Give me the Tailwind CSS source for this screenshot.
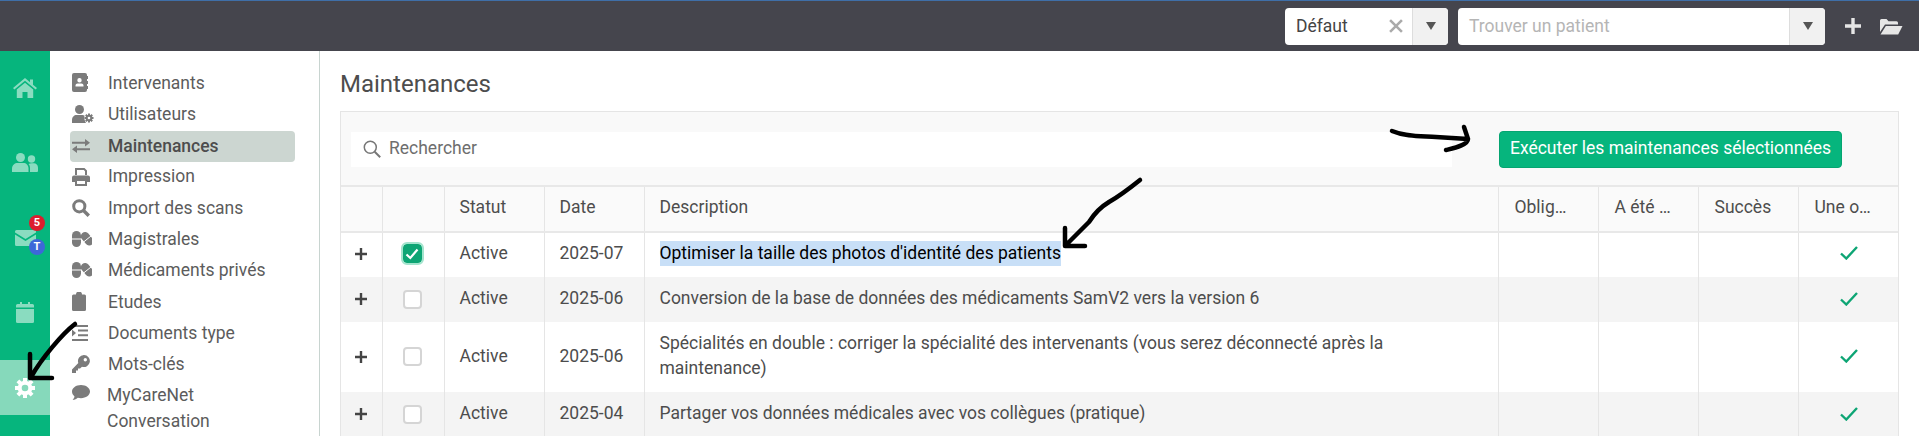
<!DOCTYPE html>
<html lang="fr">
<head>
<meta charset="UTF-8">
<title>Maintenances</title>
<script src="https://cdn.jsdelivr.net/npm/@tailwindcss/browser@4"></script>
</head>
<body class="font-['Roboto',sans-serif] text-[17.5px] text-[#4d4d4d] bg-white">
<div class="relative w-full h-screen overflow-hidden flex flex-col">

  <!-- barre du haut -->
  <header class="h-[51px] shrink-0 bg-[#45454d] border-t-[1px] border-[#3f6fa8] flex items-center justify-end pr-[16px]">
    <div class="w-[163px] h-[37px] bg-white rounded-[4px] flex items-center mr-[10px]">
      <span class="flex-1 pl-[11px] text-[#444]">Défaut</span>
      <svg class="w-[14px] h-[14px] mr-[9px]" viewBox="0 0 13 13"><path d="M1 1l11 11M12 1L1 12" stroke="#aaa" stroke-width="2.400"/></svg>
      <div class="w-[36px] h-full bg-[#f1f1f1] border-l border-[#ddd] rounded-r-[4px] flex items-center justify-center">
        <svg class="w-[10px] h-[8px]" viewBox="0 0 10 8"><path d="M0 0h10L5 8z" fill="#555"/></svg>
      </div>
    </div>
    <div class="w-[367px] h-[37px] bg-white rounded-[4px] flex items-center">
      <span class="flex-1 pl-[11px] text-[#b5b5b5]">Trouver un patient</span>
      <div class="w-[36px] h-full bg-[#f1f1f1] border-l border-[#ddd] rounded-r-[4px] flex items-center justify-center">
        <svg class="w-[10px] h-[8px]" viewBox="0 0 10 8"><path d="M0 0h10L5 8z" fill="#555"/></svg>
      </div>
    </div>
    <svg class="w-[18px] h-[18px] ml-[19px]" viewBox="0 0 18 18"><path d="M9 1v16M1 9h16" stroke="#e6e6e6" stroke-width="3.400"/></svg>
    <svg class="w-[24px] h-[19px] ml-[17px]" viewBox="0 0 24 19"><path d="M1 3.500A1.500 1.500 0 0 1 2.500 2h5l2 2.200h8a1.500 1.500 0 0 1 1.500 1.500V7.500H6L1 15z" fill="#e6e6e6"/><path d="M6.800 9H23.500l-4.300 8.500H1.500z" fill="#e6e6e6"/></svg>
  </header>

  <div class="flex flex-1 min-h-0">
    <!-- barre verte -->
    <nav class="w-[50px] shrink-0 bg-[#06b57d] flex flex-col gap-[20px] pt-[9px]">
      <div class="h-[55px] flex items-center justify-center">
        <svg class="w-[24px] h-[20px]" viewBox="0 0 24 20" fill="#8adcc0"><path d="M12 0L0 10l1.400 1.600L12 2.800l10.600 8.800L24 10l-4-3.300V1.500h-3v2.700z"/><path d="M12 4.800L3.800 11.600V20h5.700v-6h5v6h5.700v-8.400z"/></svg>
      </div>
      <div class="h-[55px] flex items-center justify-center">
        <svg class="w-[26px] h-[19px]" viewBox="0 0 26 19" fill="#8adcc0"><circle cx="8.500" cy="4.500" r="4.500"/><circle cx="19.500" cy="6" r="3.700"/><path d="M0 19v-3.500C0 12 3 10 5.500 10h6c2.500 0 5 2 5 5.500V19z"/><path d="M18 19v-4c0-1.500-.5-3-1.500-4 1-.5 2-.7 3-.7h2.500c2 0 4 1.700 4 4.500V18a1 1 0 0 1-1 1z"/></svg>
      </div>
      <div class="relative h-[55px] flex items-center justify-center">
        <svg class="w-[21px] h-[16px]" viewBox="0 0 21 16" fill="#8adcc0"><path d="M1.500 0h18A1.500 1.500 0 0 1 21 1.500v1L10.500 9 0 2.500v-1A1.500 1.500 0 0 1 1.500 0z"/><path d="M0 4.500L10.500 11 21 4.500v10a1.500 1.500 0 0 1-1.500 1.500h-18A1.500 1.500 0 0 1 0 14.500z"/></svg>
        <span class="absolute left-[29px] top-[5px] w-[16px] h-[16px] rounded-full bg-[#dc1c2e] text-white text-[11px] font-bold leading-[16px] text-center">5</span>
        <span class="absolute left-[29px] top-[29px] w-[16px] h-[16px] rounded-full bg-[#3d68d8] text-white text-[11px] font-bold leading-[16px] text-center">T</span>
      </div>
      <div class="h-[55px] flex items-center justify-center">
        <svg class="w-[18px] h-[21px]" viewBox="0 0 18 21" fill="#8adcc0"><path d="M4 0h2v3H4zM12 0h2v3h-2z"/><path d="M1.500 2h15A1.500 1.500 0 0 1 18 3.500v2H0v-2A1.500 1.500 0 0 1 1.500 2z"/><path d="M0 7h18v12.500a1.500 1.500 0 0 1-1.500 1.500h-15A1.500 1.500 0 0 1 0 19.500z"/></svg>
      </div>
      <div class="h-[55px] bg-[#86d9bb] flex items-center justify-center">
        <svg class="w-[20px] h-[20px]" viewBox="0 0 20 20" fill="none" stroke="#fff"><circle cx="10" cy="10" r="5.300" stroke-width="4"/><path stroke-width="4" d="M10 0v4M10 16v4M0 10h4M16 10h4M2.900 2.900l2.800 2.800M14.300 14.300l2.800 2.800M2.900 17.100l2.800-2.800M14.300 5.700l2.800-2.800"/></svg>
      </div>
    </nav>

    <!-- menu -->
    <aside class="w-[270px] shrink-0 border-r border-[#c8d4d0] pl-[20px] pr-[24px] pt-[16px] text-[#5c5c5c]">
      <ul class="flex flex-col">
        <li class="h-[31.300px] flex items-center">
          <span class="w-[38px] pl-[2px]"><svg class="w-[16px] h-[19px]" viewBox="0 0 16 19"><path fill="#7b7b7b" fill-rule="evenodd" d="M2 0h11a2 2 0 0 1 2 2v15a2 2 0 0 1-2 2H2a2 2 0 0 1-2-2V2a2 2 0 0 1 2-2zM7.500 5a2.200 2.200 0 1 0 0 4.400 2.200 2.200 0 0 0 0-4.400zM3.500 13.500h8v-1c0-1.300-1-2-2-2h-4c-1 0-2 .7-2 2z"/><path fill="#7b7b7b" d="M15 3h1v3h-1zM15 8h1v3h-1zM15 13h1v3h-1z"/></svg></span>
          <span>Intervenants</span>
        </li>
        <li class="h-[31.300px] flex items-center">
          <span class="w-[38px] pl-[2px]"><svg class="w-[22px] h-[18px]" viewBox="0 0 22 18" fill="#7b7b7b"><circle cx="7.500" cy="4.500" r="4.500"/><path d="M0 18v-3c0-3 2.200-5 4.500-5h6c.8 0 1.500.2 2 .5-.6 2.500.2 5.500 1.500 7.500z"/><circle cx="17" cy="13" r="2.300" fill="none" stroke="#7b7b7b" stroke-width="2"/><path stroke="#7b7b7b" stroke-width="2" d="M17 8.500v2M17 15.500v2M12.500 13h2M19.500 13h2M13.800 9.800l1.400 1.400M18.800 14.800l1.400 1.400M13.800 16.200l1.400-1.400M18.800 11.200l1.400-1.400"/></svg></span>
          <span>Utilisateurs</span>
        </li>
        <li class="h-[31.300px] mt-[1px] -mb-[1px] flex items-center bg-[#ccd6d1] rounded-[4px] font-medium text-[#4d4d4d]">
          <span class="w-[38px] pl-[2px]"><svg class="w-[18px] h-[14px]" viewBox="0 0 18 14" fill="#7b7b7b"><path d="M0 2.700h13V0l5 3.700-5 3.700V4.700H0z"/><path d="M18 9.300H5V6.600L0 10.300 5 14v-2.700h13z"/></svg></span>
          <span>Maintenances</span>
        </li>
        <li class="h-[31.300px] flex items-center">
          <span class="w-[38px] pl-[2px]"><svg class="w-[18px] h-[18px]" viewBox="0 0 18 18"><path fill="#7b7b7b" d="M3 0h9.500L15 2.500V7h-2V3.200L11.800 2H5v5H3z"/><path fill="#7b7b7b" fill-rule="evenodd" d="M2 7.500h14a2 2 0 0 1 2 2V14h-3v4H3v-4H0V9.500a2 2 0 0 1 2-2zM5 13v3h8v-3z"/></svg></span>
          <span>Impression</span>
        </li>
        <li class="h-[31.300px] flex items-center">
          <span class="w-[38px] pl-[2px]"><svg class="w-[18px] h-[18px]" viewBox="0 0 18 18" fill="none" stroke="#7b7b7b"><circle cx="7.300" cy="7.300" r="5.600" stroke-width="3"/><path stroke-width="3.400" d="M11.500 11.500l5.300 5.300"/></svg></span>
          <span>Import des scans</span>
        </li>
        <li class="h-[31.300px] flex items-center">
          <span class="w-[38px] pl-[2px]"><svg class="w-[20px] h-[16px]" viewBox="0 0 20 16"><rect x="0" y="0" width="9" height="16" rx="4.500" fill="#7b7b7b"/><rect x="11" y="0.500" width="8.500" height="15" rx="4.250" fill="#7b7b7b" transform="rotate(-40 15 8)"/><path d="M0 8h9M11 11.500l8-6.500" stroke="#fff" stroke-width="1"/></svg></span>
          <span>Magistrales</span>
        </li>
        <li class="h-[31.300px] flex items-center">
          <span class="w-[38px] pl-[2px]"><svg class="w-[20px] h-[16px]" viewBox="0 0 20 16"><rect x="0" y="0" width="9" height="16" rx="4.500" fill="#7b7b7b"/><rect x="11" y="0.500" width="8.500" height="15" rx="4.250" fill="#7b7b7b" transform="rotate(-40 15 8)"/><path d="M0 8h9M11 11.500l8-6.500" stroke="#fff" stroke-width="1"/></svg></span>
          <span>Médicaments privés</span>
        </li>
        <li class="h-[31.300px] flex items-center">
          <span class="w-[38px] pl-[2px]"><svg class="w-[14px] h-[19px]" viewBox="0 0 14 19" fill="#7b7b7b"><path d="M1.500 2.500H4a3 3 0 0 1 6 0h2.500A1.500 1.500 0 0 1 14 4v13.500a1.500 1.500 0 0 1-1.500 1.500h-11A1.500 1.500 0 0 1 0 17.500V4a1.500 1.500 0 0 1 1.500-1.500z"/></svg></span>
          <span>Etudes</span>
        </li>
        <li class="h-[31.300px] flex items-center">
          <span class="w-[38px] pl-[2px]"><svg class="w-[16px] h-[16px]" viewBox="0 0 16 16" fill="#7b7b7b"><path d="M0 0h16v2H0zM6 4.600h10v2H6zM6 9.200h10v2H6zM0 14h16v2H0zM0 4.500L4 8l-4 3.500z"/></svg></span>
          <span>Documents type</span>
        </li>
        <li class="h-[31.300px] flex items-center">
          <span class="w-[38px] pl-[2px]"><svg class="w-[18px] h-[18px]" viewBox="0 0 18 18"><path fill="#7b7b7b" fill-rule="evenodd" d="M12 0a6 6 0 1 1-2 11.700L8 13.500H6v2H4V18H0v-3.500L6.300 8A6 6 0 0 1 12 0zm1.300 3a1.700 1.700 0 1 0 0 3.400 1.700 1.700 0 0 0 0-3.400z"/></svg></span>
          <span>Mots-clés</span>
        </li>
        <li class="flex items-start pt-[5px]">
          <span class="w-[38px] pl-[2px]"><svg class="w-[18px] h-[15px]" viewBox="0 0 18 15" fill="#7b7b7b"><path d="M9 0c5 0 9 2.900 9 6.600s-4 6.600-9 6.600c-1.100 0-2.200-.2-3.200-.5C4.700 13.800 2.800 15 .6 15c.9-1 1.700-2.300 1.900-3.500C1 10.200 0 8.500 0 6.600 0 2.900 4 0 9 0z"/></svg></span>
          <span class="-ml-[1px] leading-[26px] -mt-[3px]">MyCareNet<br>Conversation</span>
        </li>
      </ul>
    </aside>

    <!-- contenu -->
    <main class="flex-1 min-w-0 px-[20px] pt-[19px]">
      <h1 class="text-[24px] leading-[28px] text-[#4d4d4d] mb-[13px]">Maintenances</h1>
      <section class="border border-[#e5e5e5]">
        <div class="h-[73px] bg-[#f9f9f9] flex items-start pl-[10px] pt-[19px]">
          <label class="w-[1101px] h-[35px] mt-[1px] bg-white flex items-center pl-[12px] pb-[2px] text-[#6e6e6e]">
            <svg class="w-[18px] h-[18px] mr-[8px]" viewBox="0 0 18 18" fill="none" stroke="#777"><circle cx="7.300" cy="7.300" r="6" stroke-width="1.500"/><path stroke-width="2" d="M11.700 11.700l5.500 5.500"/></svg>
            Rechercher
          </label>
          <button class="ml-[47px] w-[343px] h-[37px] bg-[#06b57d] border border-[#05a571] rounded-[4px] pb-[2px] text-white">Exécuter les maintenances sélectionnées</button>
        </div>
        <table class="w-full table-fixed border-collapse leading-[25px] [&_td]:pb-[2px] [&_th]:pb-[3px]">
          <colgroup>
            <col class="w-[41px]"><col class="w-[62px]"><col class="w-[100px]"><col class="w-[100px]"><col>
            <col class="w-[100px]"><col class="w-[100px]"><col class="w-[100px]"><col class="w-[100px]">
          </colgroup>
          <thead>
            <tr class="h-[46px] bg-[#fafafa] border-y-2 border-[#e8e8e8] text-left font-normal">
              <th class="border-r border-[#e5e5e5]"></th>
              <th class="border-r border-[#e5e5e5]"></th>
              <th class="border-r border-[#e5e5e5] px-[15px] font-normal">Statut</th>
              <th class="border-r border-[#e5e5e5] px-[15px] font-normal">Date</th>
              <th class="border-r border-[#e5e5e5] px-[15px] font-normal">Description</th>
              <th class="border-r border-[#e5e5e5] pl-[16px] pr-[10px] font-normal">Oblig…</th>
              <th class="border-r border-[#e5e5e5] pl-[16px] pr-[10px] font-normal">A été …</th>
              <th class="border-r border-[#e5e5e5] pl-[16px] pr-[10px] font-normal">Succès</th>
              <th class="pl-[16px] pr-[10px] font-normal">Une o…</th>
            </tr>
          </thead>
          <tbody>
            <tr class="h-[45px] [&>td]:pb-[4px]">
              <td class="border-r border-[#e5e5e5] text-center"><svg class="inline w-[14px] h-[14px]" viewBox="0 0 14 14"><path d="M7 1v12M1 7h12" stroke="#444" stroke-width="2.400"/></svg></td>
              <td class="border-r border-[#e5e5e5] text-center pr-[2px]"><span class="inline-flex w-[19px] h-[19px] align-middle items-center justify-center rounded-[4px] bg-[#0da574] outline-[2px] outline-[#a3e4cd]"><svg class="w-[14px] h-[12px]" viewBox="0 0 14 12" fill="none"><path d="M1.500 6.500l3.800 3.500 7.200-8.500" stroke="#fff" stroke-width="2.200"/></svg></span></td>
              <td class="border-r border-[#e5e5e5] px-[15px]">Active</td>
              <td class="border-r border-[#e5e5e5] px-[15px]">2025-07</td>
              <td class="border-r border-[#e5e5e5] px-[15px]"><span class="inline-block align-top bg-[#c8dff7] text-black">Optimiser la taille des photos d'identité des patients</span></td>
              <td class="border-r border-[#e5e5e5]"></td><td class="border-r border-[#e5e5e5]"></td><td class="border-r border-[#e5e5e5]"></td>
              <td class="pl-[41px]"><svg class="w-[18px] h-[14px]" viewBox="0 0 18 14" fill="none"><path d="M1 7.500l5.300 5L17 1" stroke="#0da574" stroke-width="2.400"/></svg></td>
            </tr>
            <tr class="h-[45px] bg-[#f4f4f4]">
              <td class="border-r border-[#e5e5e5] text-center"><svg class="inline w-[14px] h-[14px]" viewBox="0 0 14 14"><path d="M7 1v12M1 7h12" stroke="#444" stroke-width="2.400"/></svg></td>
              <td class="border-r border-[#e5e5e5] text-center pr-[2px]"><span class="inline-block w-[19px] h-[19px] align-middle rounded-[4px] bg-white border-2 border-[#d5d5d5]"></span></td>
              <td class="border-r border-[#e5e5e5] px-[15px]">Active</td>
              <td class="border-r border-[#e5e5e5] px-[15px]">2025-06</td>
              <td class="border-r border-[#e5e5e5] px-[15px]">Conversion de la base de données des médicaments SamV2 vers la version 6</td>
              <td class="border-r border-[#e5e5e5]"></td><td class="border-r border-[#e5e5e5]"></td><td class="border-r border-[#e5e5e5]"></td>
              <td class="pl-[41px]"><svg class="w-[18px] h-[14px]" viewBox="0 0 18 14" fill="none"><path d="M1 7.500l5.300 5L17 1" stroke="#0da574" stroke-width="2.400"/></svg></td>
            </tr>
            <tr class="h-[70px]">
              <td class="border-r border-[#e5e5e5] text-center"><svg class="inline w-[14px] h-[14px]" viewBox="0 0 14 14"><path d="M7 1v12M1 7h12" stroke="#444" stroke-width="2.400"/></svg></td>
              <td class="border-r border-[#e5e5e5] text-center pr-[2px]"><span class="inline-block w-[19px] h-[19px] align-middle rounded-[4px] bg-white border-2 border-[#d5d5d5]"></span></td>
              <td class="border-r border-[#e5e5e5] px-[15px]">Active</td>
              <td class="border-r border-[#e5e5e5] px-[15px]">2025-06</td>
              <td class="border-r border-[#e5e5e5] px-[15px]">Spécialités en double : corriger la spécialité des intervenants (vous serez déconnecté après la<br>maintenance)</td>
              <td class="border-r border-[#e5e5e5]"></td><td class="border-r border-[#e5e5e5]"></td><td class="border-r border-[#e5e5e5]"></td>
              <td class="pl-[41px]"><svg class="w-[18px] h-[14px]" viewBox="0 0 18 14" fill="none"><path d="M1 7.500l5.300 5L17 1" stroke="#0da574" stroke-width="2.400"/></svg></td>
            </tr>
            <tr class="h-[45px] bg-[#f4f4f4]">
              <td class="border-r border-[#e5e5e5] text-center"><svg class="inline w-[14px] h-[14px]" viewBox="0 0 14 14"><path d="M7 1v12M1 7h12" stroke="#444" stroke-width="2.400"/></svg></td>
              <td class="border-r border-[#e5e5e5] text-center pr-[2px]"><span class="inline-block w-[19px] h-[19px] align-middle rounded-[4px] bg-white border-2 border-[#d5d5d5]"></span></td>
              <td class="border-r border-[#e5e5e5] px-[15px]">Active</td>
              <td class="border-r border-[#e5e5e5] px-[15px]">2025-04</td>
              <td class="border-r border-[#e5e5e5] px-[15px]">Partager vos données médicales avec vos collègues (pratique)</td>
              <td class="border-r border-[#e5e5e5]"></td><td class="border-r border-[#e5e5e5]"></td><td class="border-r border-[#e5e5e5]"></td>
              <td class="pl-[41px]"><svg class="w-[18px] h-[14px]" viewBox="0 0 18 14" fill="none"><path d="M1 7.500l5.300 5L17 1" stroke="#0da574" stroke-width="2.400"/></svg></td>
            </tr>
          </tbody>
        </table>
      </section>
    </main>
  </div>

  <!-- flèches dessinées à la main -->
  <svg class="absolute left-0 top-0 w-[1919px] h-[436px] pointer-events-none" viewBox="0 0 1919 436" fill="none" stroke="#000" stroke-width="4.500" stroke-linecap="round" stroke-linejoin="round">
    <path d="M75 324C62 334 42 358 31 377M30 354v24h22"/>
    <path d="M1392 131c14 6 30 5 44 6l32 2M1464 127l4 12c0 6-14 9-22 11"/>
    <path d="M1140 180c-10 8-22 17-31 22-10 6-15 12-20 20l-23 23M1065 228v18h20"/>
  </svg>
</div>
</body>
</html>
